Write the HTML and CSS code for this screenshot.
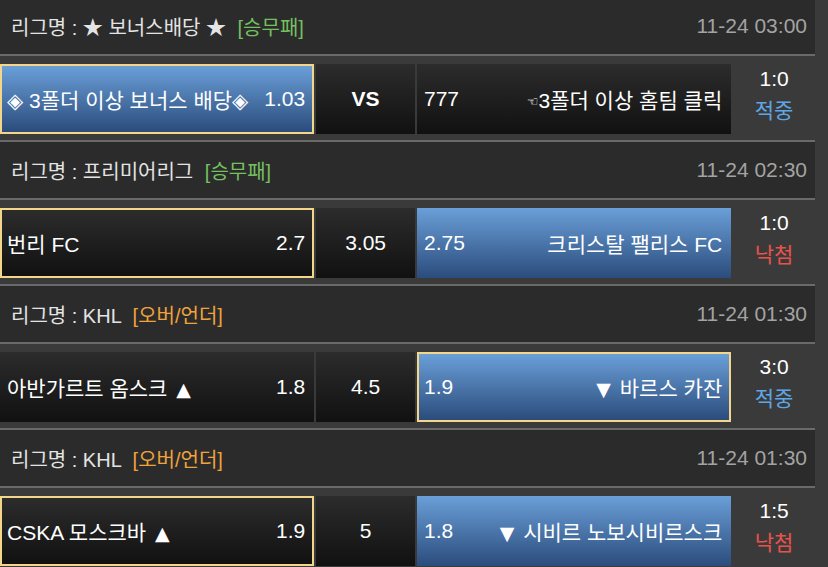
FILE: index.html
```html
<!DOCTYPE html>
<html lang="ko">
<head>
    <meta charset="UTF-8">
    <meta name="viewport" content="width=device-width, initial-scale=1.0">
    <title>경기 결과</title>
    <link rel="stylesheet" href="styles.css">
</head>
<body>
    <div class="games">
        <div class="league-head">
            <span class="league-name">리그명 : ★ 보너스배당 ★ <span class="market win">[승무패]</span></span>
            <span class="kickoff">11-24 03:00</span>
        </div>
        <div class="match">
            <div class="pick home blue picked"><span><span class="mark">◈</span> 3폴더 이상 보너스 배당<span class="mark">◈</span></span><span>1.03</span></div>
            <div class="draw vs">VS</div>
            <div class="pick away"><span>777</span><span><span class="hand">☜</span>3폴더 이상 홈팀 클릭</span></div>
            <div class="result"><span>1:0</span><span class="hit">적중</span></div>
        </div>

        <div class="league-head">
            <span class="league-name">리그명 : 프리미어리그 <span class="market win">[승무패]</span></span>
            <span class="kickoff">11-24 02:30</span>
        </div>
        <div class="match">
            <div class="pick home picked"><span>번리 FC</span><span>2.7</span></div>
            <div class="draw">3.05</div>
            <div class="pick away blue"><span>2.75</span><span>크리스탈 팰리스 FC</span></div>
            <div class="result"><span>1:0</span><span class="miss">낙첨</span></div>
        </div>

        <div class="league-head">
            <span class="league-name">리그명 : KHL <span class="market ou">[오버/언더]</span></span>
            <span class="kickoff">11-24 01:30</span>
        </div>
        <div class="match">
            <div class="pick home"><span>아반가르트 옴스크 <span class="arrow">▲</span></span><span>1.8</span></div>
            <div class="draw">4.5</div>
            <div class="pick away blue picked"><span>1.9</span><span><span class="arrow">▼</span> 바르스 카잔</span></div>
            <div class="result"><span>3:0</span><span class="hit">적중</span></div>
        </div>

        <div class="league-head">
            <span class="league-name">리그명 : KHL <span class="market ou">[오버/언더]</span></span>
            <span class="kickoff">11-24 01:30</span>
        </div>
        <div class="match">
            <div class="pick home picked"><span>CSKA 모스크바 <span class="arrow">▲</span></span><span>1.9</span></div>
            <div class="draw">5</div>
            <div class="pick away blue"><span>1.8</span><span><span class="arrow">▼</span> 시비르 노보시비르스크</span></div>
            <div class="result"><span>1:5</span><span class="miss">낙첨</span></div>
        </div>
    </div>
</body>
</html>
```

FILE: styles.css
```css
body {
    margin: 0;
    background-color: #3a3a3a;
    color: #fff;
    font-family: "Liberation Sans", "Noto Sans CJK KR", sans-serif;
    overflow: hidden;
}
.games {
    width: 815px;
    margin-top: -2px;
}
.league-head {
    height: 58px;
    box-sizing: border-box;
    display: flex;
    align-items: center;
    justify-content: space-between;
    padding: 0 8px 0 11px;
    background-color: #2b2b2b;
    border-bottom: 2px solid #6a6a6a;
    font-size: 20px;
    color: #e4e4e4;
}
.market {
    margin-left: 6px;
}
.market.win {
    color: #74c060;
}
.market.ou {
    color: #f0a33c;
}
.kickoff {
    font-size: 21px;
    color: #a3a3a3;
}
.match {
    display: flex;
    gap: 2px;
    padding: 8px 0 6px;
    border-bottom: 2px solid #6a6a6a;
}
.pick, .draw {
    height: 70px;
    box-sizing: border-box;
    font-size: 21px;
    background: linear-gradient(#2c2c2c, #111);
}
.pick {
    width: 315px;
    display: flex;
    align-items: center;
    justify-content: space-between;
    padding: 0 9px 0 7px;
}
.draw {
    width: 99px;
    display: flex;
    align-items: center;
    justify-content: center;
}
.vs {
    font-weight: 700;
}
.pick.blue {
    background: linear-gradient(#6a9fd8, #2b4c7c);
}
.pick.picked {
    border: 2px solid #f3d68a;
    padding: 0 7px 0 5px;
}
.mark {
    font-family: "DejaVu Sans", sans-serif;
    font-size: 21px;
}
.arrow {
    font-family: "DejaVu Sans", sans-serif;
    font-size: 19px;
    margin: 0 3px;
}
.hand {
    font-size: 13px;
    font-family: "DejaVu Sans", sans-serif;
    vertical-align: 2px;
}
.result {
    width: 82px;
    height: 70px;
    box-sizing: border-box;
    padding-bottom: 10px;
    display: flex;
    flex-direction: column;
    align-items: center;
    justify-content: center;
    gap: 11px;
    font-size: 21px;
    line-height: 1;
}
.hit {
    color: #5ea6e6;
}
.miss {
    color: #e8524c;
}
```
